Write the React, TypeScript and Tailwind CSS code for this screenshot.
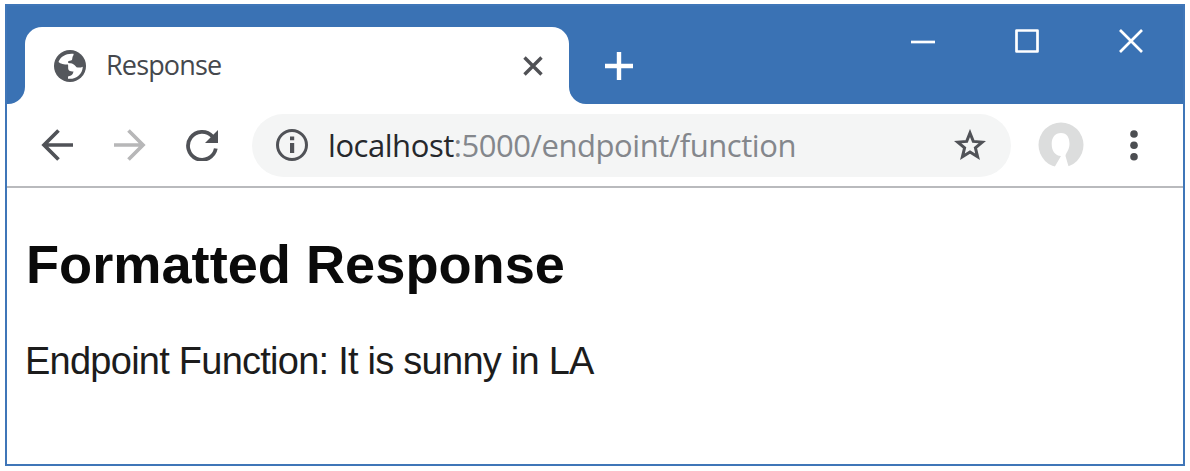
function Globe() {
  return (
    <svg className="h-8 w-8 shrink-0" viewBox="0 0 32 32">
      <circle cx="16" cy="16" r="16" fill="#54575c" />
      <path
        fill="#fff"
        d="M19.500 3.800C13 3 6.500 6 4.500 12c2 2 5.500 2.500 9.500 2.500.5 2-.5 4.500 1 6 1.200 1 3 .8 4.500 1-.5 2-1 3.200-2.500 4l-3 1v2.200c7.500 1 14.500-4.200 14.800-12-2.300 1-4.300 1-6.300.5-1.500-1.500-2.500-3-4.500-3.700-1.500-.5-3.500 0-4-1-.3-1.500 1.500-1.800 3-2 1.800-.5 1-2 1.500-3.200.3-1.300 1.500-2 1-3.500z"
      />
    </svg>
  );
}

function TabStrip() {
  return (
    <div className="flex h-[98px] bg-[#3a72b4]">
      <div className="flex w-[18px] items-end bg-white">
        <div className="h-full w-full rounded-br-[17px] bg-[#3a72b4]" />
      </div>
      <div className="flex w-[544px] flex-col justify-end bg-[#3a72b4]">
        <div className="flex h-[77px] items-center rounded-t-[17px] bg-white pl-[29px] pr-[26px]">
          <Globe />
          <span className="ml-5 flex-1 pb-[2px] font-['Open_Sans',sans-serif] text-[27px] leading-none tracking-[-0.850px] text-[#45484d]">
            Response
          </span>
          <svg className="h-5 w-5" viewBox="0 0 20 20" stroke="#505155" strokeWidth="3.400">
            <path d="M1.500 1.500l17 17M18.500 1.500l-17 17" />
          </svg>
        </div>
      </div>
      <div className="flex-1 bg-white">
        <div className="flex h-full items-start rounded-bl-[17px] bg-[#3a72b4]">
          <svg className="ml-[36px] mt-[46px] h-7 w-7 shrink-0" viewBox="0 0 28 28" stroke="#fff" strokeWidth="4.400">
            <path d="M0 14h28M14 0v28" />
          </svg>
          <div className="ml-auto mr-[40px] mt-[23px] flex items-center gap-[80px]">
            <svg className="h-6 w-6" viewBox="0 0 24 24" stroke="#fff" strokeWidth="2.700">
              <path d="M0 13h24" />
            </svg>
            <svg className="h-6 w-6" viewBox="0 0 24 24" fill="none" stroke="#fff" strokeWidth="2.700" strokeLinejoin="round">
              <path d="M1.500 1.500h21v21h-21z" />
            </svg>
            <svg className="h-6 w-6" viewBox="0 0 24 24" stroke="#fff" strokeWidth="2.700">
              <path d="M1 1l22 22M23 1l-22 22" />
            </svg>
          </div>
        </div>
      </div>
    </div>
  );
}

function Toolbar() {
  return (
    <div className="flex h-[84px] items-center border-b-2 border-[#b9babd] bg-white text-[#505257]">
      <svg className="ml-[34px] h-8 w-8 shrink-0" viewBox="0 0 32 32" fill="none" stroke="currentColor" strokeWidth="3.700">
        <path d="M32 16H3M17.500 1.500L3 16l14.500 14.500" />
      </svg>
      <svg className="ml-[41px] h-8 w-8 shrink-0 text-[#b7b7b8]" viewBox="0 0 32 32" fill="none" stroke="currentColor" strokeWidth="3.700">
        <path d="M0 16h29M14.500 1.500L29 16 14.500 30.500" />
      </svg>
      <svg className="ml-[40px] h-8 w-8 shrink-0" viewBox="0 0 32 32">
        <path d="M26.500 7.500A14 14 0 1 0 29.800 19.500" fill="none" stroke="currentColor" strokeWidth="3.800" />
        <path d="M32 1v13H19z" fill="currentColor" />
      </svg>
      <div className="ml-[34px] flex h-[63px] w-[759px] items-center rounded-full bg-[#f4f5f5] pl-6 pr-6">
        <svg className="h-8 w-8 shrink-0" viewBox="0 0 32 32">
          <circle cx="16" cy="16" r="14.500" fill="none" stroke="currentColor" strokeWidth="3" />
          <path d="M14 7.500h4.200v3.800H14zM14 14h4.200v10H14z" fill="currentColor" />
        </svg>
        <span className="ml-5 flex-1 whitespace-nowrap font-['Open_Sans',sans-serif] text-[31px] leading-none tracking-[-0.450px] text-[#84878c]">
          <span className="text-[#26282c]">localhost</span>:5000/endpoint/function
        </span>
        <svg className="mr-[1px] h-8 w-8 shrink-0" viewBox="0 0 32 32" fill="none" stroke="currentColor" strokeWidth="3">
          <path d="M16 4l3.300 8.400 9 .7-6.900 5.800 2.200 8.900L16 23l-7.600 4.800 2.200-8.900-6.900-5.800 9-.7z" />
        </svg>
      </div>
      <svg className="ml-[27px] h-[46px] w-[46px] shrink-0" viewBox="0 0 46 46">
        <circle cx="23" cy="23" r="22.500" fill="#dcdddd" />
        <path fill="#fff" d="M23 11c-6 0-9.300 4.500-9.300 11 0 7 3.300 11.500 9.300 12L16 46h15L27.500 34c0-3 4-6 4-12C31.500 15.500 29 11 23 11z" />
      </svg>
      <svg className="ml-[46px] h-8 w-2 shrink-0" viewBox="0 0 8 32" fill="#4c4e52">
        <circle cx="4" cy="5" r="3.800" />
        <circle cx="4" cy="16.300" r="3.800" />
        <circle cx="4" cy="27.800" r="3.800" />
      </svg>
    </div>
  );
}

export default function App() {
  return (
    <div className="h-[471px] w-[1190px] overflow-hidden bg-white pl-[5px] pt-1">
      <div className="h-[462px] w-[1180px] border-2 border-[#3f76b8] bg-white">
        <TabStrip />
        <Toolbar />
        <main className="pl-[18px] pt-[45px] font-['Liberation_Sans',Arial,sans-serif]">
          <h1 className="ml-[1px] whitespace-nowrap text-[54.200px] font-bold leading-[62px] text-[#0a0a0a]">Formatted Response</h1>
          <p className="mt-11 whitespace-nowrap text-[38px] leading-[44px] tracking-[-0.750px] text-[#1c1c1c]">
            Endpoint Function: It is sunny in LA
          </p>
        </main>
      </div>
    </div>
  );
}
